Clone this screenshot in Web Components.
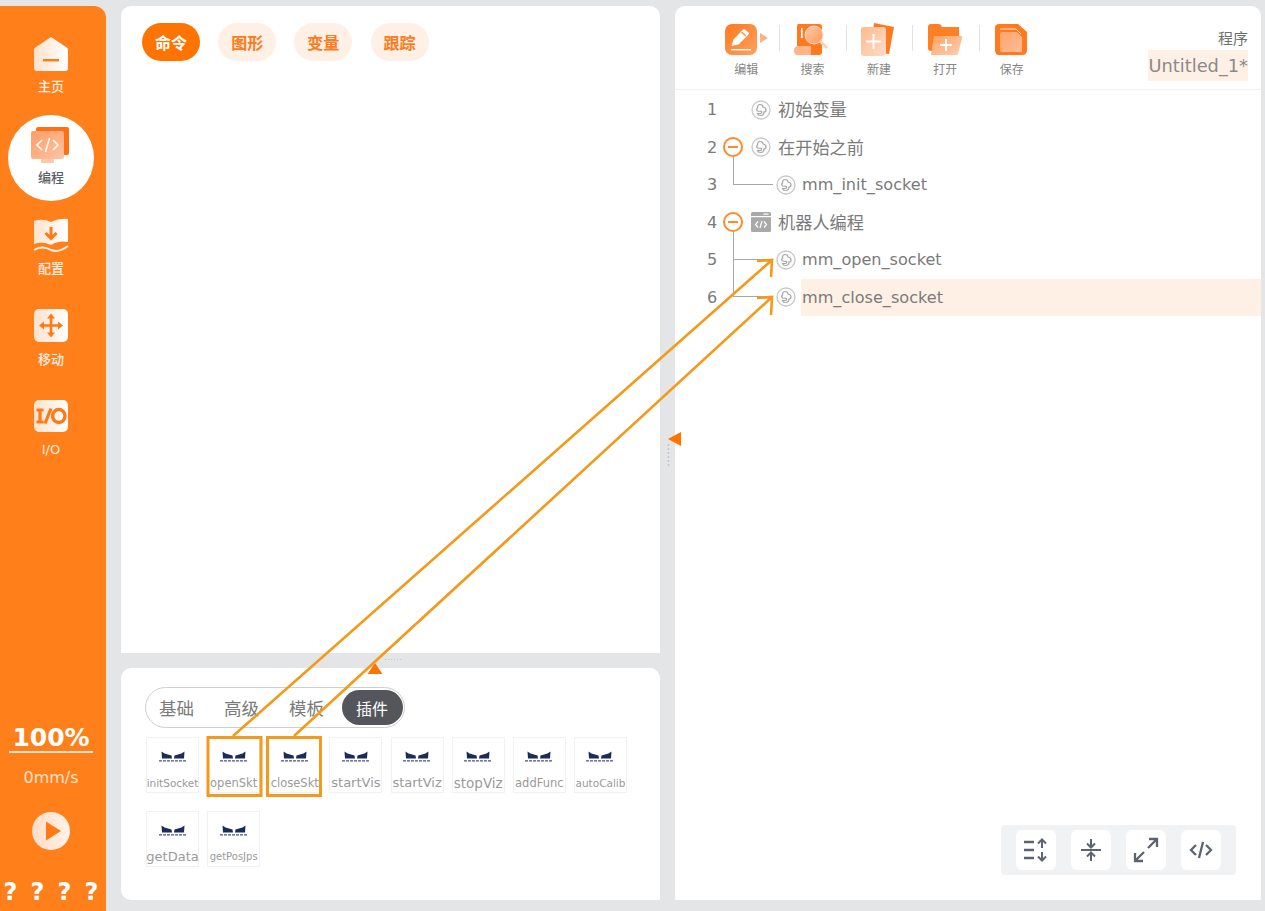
<!DOCTYPE html>
<html lang="zh">
<head>
<meta charset="utf-8">
<title>Program</title>
<style>
	html, body {
		margin: 0;
		height: 100%;
		overflow: hidden;
		background: #e4e5e7;
		font-family: "DejaVu Sans", "Noto Sans CJK SC", sans-serif;
	}
</style>
</head>
<body>
<x-app>
	<x-sidebar slot="side">
		<x-nav icon="home" label="主页"></x-nav>
		<x-nav icon="code" label="编程" active></x-nav>
		<x-nav icon="book" label="配置"></x-nav>
		<x-nav icon="move" label="移动"></x-nav>
		<x-nav icon="io" label="I/O" thin></x-nav>
	</x-sidebar>

	<x-panel slot="commands">
		<x-pills>
			<x-pill active>命令</x-pill>
			<x-pill>图形</x-pill>
			<x-pill>变量</x-pill>
			<x-pill>跟踪</x-pill>
		</x-pills>
	</x-panel>

	<x-panel slot="plugins">
		<x-segments>
			<x-segment>基础</x-segment>
			<x-segment>高级</x-segment>
			<x-segment>模板</x-segment>
			<x-segment active>插件</x-segment>
		</x-segments>
		<x-tiles>
			<x-tile size="10.5">initSocket</x-tile>
			<x-tile size="11.5">openSkt</x-tile>
			<x-tile size="11.5">closeSkt</x-tile>
			<x-tile size="13">startVis</x-tile>
			<x-tile size="13">startViz</x-tile>
			<x-tile size="13.5">stopViz</x-tile>
			<x-tile size="11.5">addFunc</x-tile>
			<x-tile size="10.5">autoCalib</x-tile>
			<x-tile size="13">getData</x-tile>
			<x-tile size="10">getPosJps</x-tile>
		</x-tiles>
	</x-panel>

	<x-panel slot="program">
		<x-program-head>
			<x-tool icon="edit" label="编辑" caret></x-tool>
			<x-tool icon="search" label="搜索"></x-tool>
			<x-tool icon="new" label="新建"></x-tool>
			<x-tool icon="open" label="打开"></x-tool>
			<x-tool icon="save" label="保存"></x-tool>
		</x-program-head>
		<x-tree>
			<x-row num="1" icon="node" label="初始变量" cjk></x-row>
			<x-row num="2" icon="node" label="在开始之前" cjk fold></x-row>
			<x-row num="3" icon="node" label="mm_init_socket" child></x-row>
			<x-row num="4" icon="robot" label="机器人编程" cjk fold></x-row>
			<x-row num="5" icon="node" label="mm_open_socket" child></x-row>
			<x-row num="6" icon="node" label="mm_close_socket" child long selected></x-row>
		</x-tree>
		<x-view-tools></x-view-tools>
	</x-panel>

	<x-grip slot="overlay" dir="up"></x-grip>
	<x-grip slot="overlay" dir="left"></x-grip>
	<x-callouts slot="overlay"></x-callouts>
</x-app>

<script>
const ICONS = {
	home: `<svg width="36" height="36" viewBox="0 0 36 36"><defs><linearGradient id="g"><stop offset="0" stop-color="#ffe1cc"/><stop offset="1" stop-color="#fff"/></linearGradient></defs>
		<path d="M18 1 L33 11 Q35 12 35 14 V32 Q35 35 32 35 H4 Q1 35 1 32 V14 Q1 12 3 11 Z" fill="url(#g)"/>
		<rect x="10" y="23" width="16" height="2.4" fill="#ff7a14"/></svg>`,
	code: `<svg width="40" height="38" viewBox="0 0 40 38"><defs><linearGradient id="g" x1="0" y1="0" x2="1" y2="1"><stop offset="0" stop-color="#ff9c66"/><stop offset="1" stop-color="#ffc4a3"/></linearGradient></defs>
		<rect x="5" y="0" width="33" height="28" rx="2" fill="#ff6f14"/>
		<rect x="0" y="4" width="33" height="28" rx="2" fill="url(#g)"/>
		<path d="M11 13 L6 18 L11 23 M22 13 L27 18 L22 23 M18.500 11 L14.500 25" fill="none" stroke="#fff" stroke-width="1.600"/>
		<rect x="10" y="32" width="13" height="4" rx="1" fill="#ffc9a8"/></svg>`,
	book: `<svg width="36" height="36" viewBox="0 0 36 36"><defs><linearGradient id="g"><stop offset="0" stop-color="#ffe1cc"/><stop offset="1" stop-color="#fff"/></linearGradient></defs>
		<path d="M1 3 Q10 0 18 4 Q26 0 35 1 V24 Q26 22 18 27 Q10 23 1 26 Z" fill="url(#g)"/>
		<path d="M1 32 Q9 27 18 32 Q26 35 35 28" fill="none" stroke="#fff0e6" stroke-width="2"/>
		<path d="M18 9 V19 M12.500 15 L18 20.500 L23.500 15" fill="none" stroke="#ff7a14" stroke-width="3"/></svg>`,
	move: `<svg width="36" height="34" viewBox="0 0 36 34"><defs><linearGradient id="g"><stop offset="0" stop-color="#ffe1cc"/><stop offset="1" stop-color="#fff"/></linearGradient></defs>
		<rect x="1" y="0" width="34" height="33" rx="5" fill="url(#g)"/>
		<path d="M8 16.500 H28 M18 7 V26" stroke="#ff7a14" stroke-width="2.600"/>
		<path d="M18 4.500 L22 9.500 H14 Z M18 28.500 L22 23.500 H14 Z M6 16.500 L11 12.500 V20.500 Z M30 16.500 L25 12.500 V20.500 Z" fill="#ff7a14"/></svg>`,
	io: `<svg width="36" height="32" viewBox="0 0 36 32"><defs><linearGradient id="g"><stop offset="0" stop-color="#ffe1cc"/><stop offset="1" stop-color="#fff"/></linearGradient></defs>
		<rect x="1" y="0" width="34" height="32" rx="5" fill="url(#g)"/>
		<path d="M7 9.500 V22.500 M3.500 10 H10.500 M3.500 22 H10.500 M18 8.500 L12 23.500" fill="none" stroke="#ff7a14" stroke-width="3.200"/>
		<ellipse cx="25.800" cy="16" rx="6.200" ry="6.500" fill="none" stroke="#ff7a14" stroke-width="3.400"/></svg>`,
	edit: `<svg width="34" height="32" viewBox="0 0 34 32"><defs><linearGradient id="g" x1="0" y1="0" x2="1" y2="1"><stop offset="0" stop-color="#ff7a1e"/><stop offset="1" stop-color="#ffa060"/></linearGradient></defs>
		<rect x="1" y="0" width="32" height="31" rx="7" fill="url(#g)"/>
		<path d="M7.500 22 L9.500 15.500 L19 5.500 Q20 4.500 21 5.500 L24.500 8.500 Q25.500 9.500 24.500 10.500 L14.500 20.500 Z" fill="#fff"/>
		<path d="M17.500 8 L22 12" stroke="#ff8a3c" stroke-width="1.200"/>
		<rect x="7" y="25" width="20" height="1.400" fill="#fff"/></svg>`,
	search: `<svg width="36" height="33" viewBox="0 0 36 33" style="margin-left:-3px"><defs><linearGradient id="g" x1="0" y1="0" x2="1" y2="1"><stop offset="0" stop-color="#ffc9a8"/><stop offset="1" stop-color="#ff9a5c"/></linearGradient></defs>
		<path d="M5 1 H26 Q29 1 29 4 V29 Q29 32 26 32 H4 V4 Q4 1 5 1 Z" fill="#ff7a1e"/>
		<path d="M1 28 Q1 23 5 23 H18 V32 H5 Q1 32 1 28 Z" fill="#ffb48a"/>
		<rect x="8" y="5" width="1.600" height="10" fill="#fff"/>
		<circle cx="21" cy="12" r="9" fill="url(#g)" stroke="#ffd9c2" stroke-width="1"/>
		<path d="M27 18 L34 25" stroke="#ffd0b3" stroke-width="3"/></svg>`,
	new: `<svg width="36" height="36" viewBox="0 0 36 36" style="margin-left:-1px"><defs><linearGradient id="g" x1="0" y1="0" x2="1" y2="1"><stop offset="0" stop-color="#ffb98f"/><stop offset="1" stop-color="#ffdcc7"/></linearGradient></defs>
		<path d="M14 1 L34 5 L29 32 L10 30 Z" fill="#ff7a1e"/>
		<rect x="1" y="5" width="25" height="29" rx="3" fill="url(#g)"/>
		<path d="M13.500 12 V27 M6 19.500 H21" stroke="#fff" stroke-width="2"/></svg>`,
	open: `<svg width="36" height="33" viewBox="0 0 36 33" style="margin-left:-1px"><defs><linearGradient id="g" x1="0" y1="0" x2="1" y2="1"><stop offset="0" stop-color="#ffa366"/><stop offset="1" stop-color="#ffcfb0"/></linearGradient></defs>
		<path d="M1 4 Q1 1 4 1 H12 Q14 1 15 4 H32 V28 H4 Q1 28 1 25 Z" fill="#ff7f24"/>
		<path d="M7 13 H34 Q36 13 35 15 L31 31 Q30.500 32 29 32 H4 Z" fill="url(#g)"/>
		<path d="M19 16 V28 M13 22 H25" stroke="#fff" stroke-width="2"/></svg>`,
	save: `<svg width="34" height="33" viewBox="0 0 34 33" style="margin-left:-1px"><defs><linearGradient id="g" x1="0" y1="0" x2="1" y2="1"><stop offset="0" stop-color="#ffa36b"/><stop offset="1" stop-color="#ffbd94"/></linearGradient></defs>
		<path d="M5 1 H24 L33 9 V27 Q33 32 28 32 H5 Q1 32 1 27 V5 Q1 1 5 1 Z" fill="#ff7a1e"/>
		<path d="M6 6 H22 L27 11" fill="none" stroke="#ffe0cc" stroke-width="1"/>
		<path d="M6 11 Q6 9 8 9 H23 L28 14 V29 H8 Q6 29 6 27 Z" fill="url(#g)"/></svg>`,
	node: `<svg width="20" height="20" viewBox="0 0 20 20"><circle cx="10" cy="10" r="9" fill="#fbfbfb" stroke="#c8c8c8" stroke-width="1.300"/>
		<path d="M9 4.500 Q12 4.500 12 7 Q15 7.500 15 10 Q15 12 13 12 Q13 15.500 9.500 15.500 Q7 15.500 6.500 13.500 L9.500 13.500 Q11 13.500 10.500 11.500 L6.500 11 Q5 9.500 6.500 8 Q6.500 4.500 9 4.500 Z" fill="none" stroke="#a8a8a8" stroke-width="1.200"/></svg>`,
	robot: `<svg width="20" height="20" viewBox="0 0 20 20"><rect width="20" height="20" rx="1.500" fill="#a9a9a9"/><rect y="4" width="20" height="1.200" fill="#fff"/><rect x="12.500" y="1.500" width="5" height="1.200" fill="#fff"/>
		<path d="M7 9.500 L4.500 12.500 L7 15.500 M13 9.500 L15.500 12.500 L13 15.500 M11 9 L9 16" fill="none" stroke="#fff" stroke-width="1.200"/></svg>`
};

class Shadowed extends HTMLElement {
	constructor(css, html) {
		super();
		this.attachShadow({ mode: 'open' }).innerHTML = `<style>${css}</style>${html}`;
	}
}

customElements.define('x-app', class extends Shadowed {
	constructor() {
		super(`
			:host {
				display: grid;
				grid-template-columns: 106px 539px 586px;
				grid-template-rows: 647px 232px;
				column-gap: 15px;
				row-gap: 15px;
				padding: 6px 4px 0 0;
				height: 905px;
				width: 1261px;
				position: relative;
				overflow: hidden;
			}
			.side { grid-row: 1 / 3; display: flex; }
			.program { grid-column: 3; grid-row: 1 / 3; display: flex; }
			.commands, .plugins { display: flex; }
		`, `
			<div class="side"><slot name="side"></slot></div>
			<div class="commands"><slot name="commands"></slot></div>
			<div class="program"><slot name="program"></slot></div>
			<div class="plugins"><slot name="plugins"></slot></div>
			<slot name="overlay"></slot>
		`);
	}
});

customElements.define('x-sidebar', class extends Shadowed {
	constructor() {
		super(`
			:host {
				display: flex;
				flex-direction: column;
				width: 106px;
				box-sizing: border-box;
				padding: 18px 4px 0 0;
				background: #ff7f1a;
				border-radius: 0 12px 0 0;
				color: #fff;
				height: 905px;
			}
			.nav { display: flex; flex-direction: column; gap: 5px; align-items: center; }
			.status { margin-top: auto; display: flex; flex-direction: column; align-items: center; }
			.speed {
				width: 84px;
				text-align: center;
				font-size: 25px;
				font-weight: bold;
				line-height: 28px;
				height: 27px;
				padding-top: 1px;
				border-bottom: 2px solid #ffe1cc;
				white-space: nowrap;
			}
			.mm { font-size: 16px; line-height: 20px; margin-top: 15px; color: #ffe1cc; }
			.play { margin-top: 24px; width: 38px; height: 38px; display: block; }
			.help {
				display: flex;
				font-size: 24px;
				font-weight: bold;
				line-height: 28px;
				margin: 28px 0 5px;
				width: 95px;
				justify-content: space-between;
			}
		`, `
			<div class="nav"><slot></slot></div>
			<div class="status">
				<div class="speed">100%</div>
				<div class="mm">0mm/s</div>
				<svg class="play" viewBox="0 0 38 38"><defs><linearGradient id="g"><stop offset="0" stop-color="#ffdcc4"/><stop offset="1" stop-color="#fff3ea"/></linearGradient></defs>
					<circle cx="19" cy="19" r="19" fill="url(#g)"/><path d="M14 9.500 L29 19 L14 28.500 Z" fill="#ff7a14"/></svg>
				<div class="help"><span>?</span><span>?</span><span>?</span><span>?</span></div>
			</div>
		`);
	}
});

customElements.define('x-nav', class extends Shadowed {
	constructor() {
		super(`
			:host {
				display: flex;
				flex-direction: column;
				align-items: center;
				box-sizing: border-box;
				width: 86px;
				height: 86px;
				padding-top: 12px;
				border-radius: 50%;
				color: #ffeee2;
				font-size: 13px;
				font-weight: 500;
			}
			:host([active]) { background: #fff; color: #5c5f66; }
			:host([thin]) { font-weight: normal; font-size: 13px; }
			.icon { height: 38px; display: flex; align-items: flex-start; justify-content: center; }
			.text { line-height: 18px; margin-top: 4px; }
			:host([thin]) .text { margin-top: 3px; }
			svg { display: block; }
		`, `<div class="icon"></div><div class="text"></div>`);
	}

	connectedCallback() {
		this.shadowRoot.querySelector('.icon').innerHTML = ICONS[this.getAttribute('icon')];
		this.shadowRoot.querySelector('.text').textContent = this.getAttribute('label');
	}
});

customElements.define('x-panel', class extends Shadowed {
	constructor() {
		super(`
			:host {
				display: flex;
				flex-direction: column;
				flex: 1;
				background: #fff;
				border-radius: 10px 10px 0 0;
				min-width: 0;
				position: relative;
			}
			:host([slot="plugins"]) { border-radius: 10px 10px 0 10px; padding: 19px 0 0 24px; box-sizing: border-box; }
			:host([slot="program"]) { border-radius: 10px 10px 0 0; }
		`, `<slot></slot>`);
	}
});

customElements.define('x-pills', class extends Shadowed {
	constructor() {
		super(`:host { display: flex; gap: 18.200px; padding: 17px 21px; }`, `<slot></slot>`);
	}
});

customElements.define('x-pill', class extends Shadowed {
	constructor() {
		super(`
			:host {
				display: flex;
				align-items: center;
				justify-content: center;
				width: 58px;
				height: 38px;
				border-radius: 19px;
				background: #fff0e6;
				color: #ff7a1a;
				font-size: 16px;
				font-weight: bold;
			}
			:host([active]) { background: #ff7300; color: #fff; }
		`, `<slot></slot>`);
	}
});

customElements.define('x-segments', class extends Shadowed {
	constructor() {
		super(`
			:host {
				display: flex;
				align-items: center;
				box-sizing: border-box;
				width: 260px;
				height: 41px;
				border: 1.500px solid #cfcfcf;
				border-radius: 21px;
			}
		`, `<slot></slot>`);
	}
});

customElements.define('x-segment', class extends Shadowed {
	constructor() {
		super(`
			:host {
				display: flex;
				align-items: center;
				justify-content: center;
				width: 65px;
				height: 35px;
				border-radius: 18px;
				color: #7a7a7a;
				font-size: 17.500px;
			}
			:host(:first-child) { margin-left: -2px; }
			:host([active]) { background: #54565c; color: #fff; width: 61px; margin-left: 2.500px; font-size: 16px; }
		`, `<slot></slot>`);
	}
});

customElements.define('x-tiles', class extends Shadowed {
	constructor() {
		super(`
			:host {
				display: grid;
				grid-template-columns: repeat(8, 53px);
				grid-auto-rows: 56px;
				column-gap: 8.150px;
				row-gap: 18px;
				margin: 9px 0 0 1px;
			}
		`, `<slot></slot>`);
	}
});

customElements.define('x-tile', class extends Shadowed {
	constructor() {
		super(`
			:host {
				display: flex;
				flex-direction: column;
				align-items: center;
				box-sizing: border-box;
				border: 1px solid #f1f1f1;
				padding-top: 13px;
				color: #9a9a9a;
				white-space: nowrap;
			}
			svg { display: block; flex: none; }
			.name { height: 14px; line-height: 14px; margin-top: 13px; }
		`, `
			<svg width="28" height="12" viewBox="0 0 28 12" fill="#1b2c59">
				<path d="M2.500 0.500 L5.500 2.500 L12.500 4.500 L13 7.500 L3 7.500 Z M25.500 0.500 L22.500 2.500 L15.500 4.500 L15 7.500 L25 7.500 Z"/>
				<path d="M0 9.800 H28" stroke="#46547a" stroke-width="1.200" stroke-dasharray="3 1"/>
			</svg>
			<div class="name"><slot></slot></div>
		`);
	}

	connectedCallback() {
		this.shadowRoot.querySelector('.name').style.fontSize = this.getAttribute('size') + 'px';
	}
});

customElements.define('x-program-head', class extends Shadowed {
	constructor() {
		super(`
			:host {
				display: flex;
				box-sizing: border-box;
				height: 84px;
				padding-left: 38px;
				border-bottom: 1px solid #f1f1f1;
			}
			.name {
				margin-left: auto;
				margin-right: 13px;
				display: flex;
				flex-direction: column;
				align-items: flex-end;
				padding-top: 23px;
				color: #6e6e6e;
				font-size: 15px;
			}
			.label { line-height: 20px; }
			.file {
				margin-top: 1px;
				width: 100px;
				height: 31px;
				line-height: 32px;
				text-align: right;
				background: #fff0e6;
				color: #8a8a8a;
				font-size: 17.800px;
				white-space: nowrap;
			}
		`, `
			<slot></slot>
			<div class="name"><span class="label">程序</span><span class="file">Untitled_1*</span></div>
		`);
	}
});

customElements.define('x-tool', class extends Shadowed {
	constructor() {
		super(`
			:host {
				display: flex;
				flex-direction: column;
				align-items: center;
				width: 66.400px;
				padding-top: 15px;
				box-sizing: border-box;
				position: relative;
				color: #858585;
				font-size: 12px;
			}
			:host(:not(:last-child))::after {
				content: "";
				position: absolute;
				right: -1px;
				top: 19px;
				height: 26px;
				width: 1px;
				background: #e2e2e2;
			}
			.icon { height: 37px; display: flex; align-items: center; justify-content: center; position: relative; }
			:host([caret]) .icon { left: -5px; }
			.caret {
				position: absolute;
				left: 36px;
				top: 12px;
				border-style: solid;
				border-width: 5px 0 5px 8px;
				border-color: transparent transparent transparent #ffb07f;
			}
			.text { line-height: 18px; margin-top: 3px; }
			svg { display: block; }
		`, `<div class="icon"></div><div class="text"></div>`);
	}

	connectedCallback() {
		const icon = this.shadowRoot.querySelector('.icon');
		icon.innerHTML = ICONS[this.getAttribute('icon')] + (this.hasAttribute('caret') ? '<span class="caret"></span>' : '');
		this.shadowRoot.querySelector('.text').textContent = this.getAttribute('label');
	}
});

customElements.define('x-tree', class extends Shadowed {
	constructor() {
		super(`:host { display: flex; flex-direction: column; padding-top: 1px; }`, `<slot></slot>`);
	}
});

customElements.define('x-row', class extends Shadowed {
	constructor() {
		super(`
			:host {
				display: flex;
				align-items: center;
				height: 37.500px;
				padding-left: 26px;
				color: #7a7a7a;
				font-size: 16.100px;
				white-space: nowrap;
			}
			.num { width: 22px; text-align: center; }
			.fold { width: 20px; height: 20px; margin-right: 8px; box-sizing: border-box; position: relative; }
			.fold.on { border: 2px solid #ff8a2b; border-radius: 50%; background: #fff; z-index: 1; }
			.fold.on::after {
				content: "";
				position: absolute;
				left: 3px;
				right: 3px;
				top: 7px;
				height: 2px;
				background: #ff8a2b;
			}
			.elbow { width: 53px; height: 100%; position: relative; }
			.elbow::before {
				content: "";
				position: absolute;
				left: 9.500px;
				width: 40px;
				top: -9px;
				bottom: 50%;
				box-sizing: border-box;
				border-left: 1.500px solid #a8a8a8;
				border-bottom: 1px solid #a8a8a8;
			}
			:host([long]) .elbow::before { top: -28px; }
			.icon { width: 20px; height: 20px; }
			svg { display: block; }
			.label {
				flex: 1;
				align-self: stretch;
				display: flex;
				align-items: center;
				margin-left: 5px;
				padding-left: 1px;
			}
			:host([cjk]) .label { font-size: 17.200px; padding-left: 2px; padding-bottom: 2px; box-sizing: border-box; }
			:host([selected]) .label { background: #fff0e6; }
		`, `<span class="num"></span><span class="lead"></span><span class="icon"></span><span class="label"></span>`);
	}

	connectedCallback() {
		const root = this.shadowRoot;
		root.querySelector('.num').textContent = this.getAttribute('num');
		root.querySelector('.lead').className = this.hasAttribute('child') ? 'elbow' : this.hasAttribute('fold') ? 'fold on' : 'fold';
		root.querySelector('.icon').innerHTML = ICONS[this.getAttribute('icon')];
		root.querySelector('.label').textContent = this.getAttribute('label');
	}
});

customElements.define('x-view-tools', class extends Shadowed {
	constructor() {
		super(`
			:host {
				position: absolute;
				right: 25px;
				bottom: 25px;
				display: flex;
				gap: 15px;
				padding: 5px 15px;
				background: #f1f2f4;
				border-radius: 4px;
			}
			.btn {
				width: 40px;
				height: 40px;
				border-radius: 6px;
				background: #fff;
				display: flex;
				align-items: center;
				justify-content: center;
			}
			svg { fill: none; stroke: #5d6470; stroke-width: 2; display: block; }
		`, `
			<div class="btn"><svg width="26" height="26" viewBox="0 0 26 26"><path d="M1 5 H11 M1 13 H11 M1 21 H11" stroke-width="2.400"/><path d="M19 11 V3 M15 6.500 L19 2.500 L23 6.500 M19 15 V23 M15 19.500 L19 23.500 L23 19.500"/></svg></div>
			<div class="btn"><svg width="24" height="26" viewBox="0 0 24 26"><path d="M2 13 H22"/><path d="M12 2 V9.500 M8 6.500 L12 10.500 L16 6.500 M12 24 V16.500 M8 19.500 L12 15.500 L16 19.500"/></svg></div>
			<div class="btn"><svg width="26" height="26" viewBox="0 0 26 26"><path d="M15 11 L24 2 M16 2 H24 V10 M11 15 L2 24 M2 16 V24 H10" stroke-width="2.300"/></svg></div>
			<div class="btn"><svg width="24" height="20" viewBox="0 0 24 20"><path d="M7 5 L2 10 L7 15 M17 5 L22 10 L17 15 M14 2 L10 18" stroke-width="2.300"/></svg></div>
		`);
	}
});

customElements.define('x-grip', class extends Shadowed {
	constructor() {
		super(`
			:host { position: absolute; display: block; }
			:host([dir="up"]) { left: 367px; top: 657px; width: 40px; height: 18px; }
			:host([dir="left"]) { left: 665px; top: 431px; width: 18px; height: 36px; }
			svg { display: block; overflow: visible; }
		`, `<div class="mark"></div>`);
	}

	connectedCallback() {
		const up = this.getAttribute('dir') === 'up';
		this.shadowRoot.querySelector('.mark').innerHTML = up
			? `<svg width="40" height="18"><path d="M8 6 L15.500 17 H0.500 Z" fill="#ff7300"/><path d="M18 2.500 H36" stroke="#c4c6c9" stroke-dasharray="1 2"/></svg>`
			: `<svg width="18" height="36"><path d="M3 8 L16 1 V15 Z" fill="#ff7300"/><path d="M3.500 13 V35" stroke="#c4c6c9" stroke-width="1.500" stroke-dasharray="2 2"/></svg>`;
	}
});

customElements.define('x-callouts', class extends Shadowed {
	constructor() {
		super(`
			:host { position: absolute; left: 0; top: 0; pointer-events: none; }
			svg { display: block; fill: none; stroke: #f39a1c; stroke-width: 2.600; }
		`, `
			<svg width="1265" height="911">
				<rect x="208" y="737.500" width="53" height="58" stroke-width="3"/>
				<rect x="267.500" y="737.500" width="53" height="58" stroke-width="3"/>
				<path d="M233 736 L772 260 M757 261 L772 260 L771 277"/>
				<path d="M294 736 L772 297 M757 298 L772 297 L771 315"/>
			</svg>
		`);
	}
});
</script>
</body>
</html>
